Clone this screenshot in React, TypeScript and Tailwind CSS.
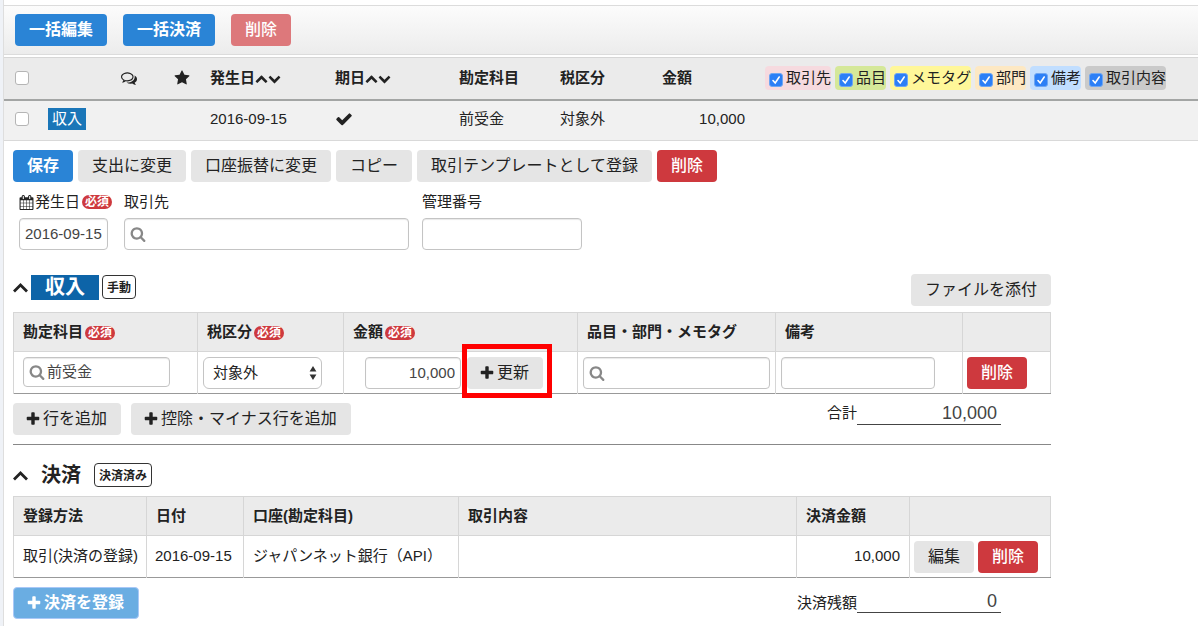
import type { ReactNode } from "react"
import clsx from "clsx"

const icons = {
  comments:
    "M704 384q-153 0-286 52t-211.5 141-78.5 191q0 82 53 158t149 132l97 56-35 84q34-20 62-39l44-31 53 10q78 14 153 14 153 0 286-52t211.5-141 78.5-191-78.5-191-211.5-141-286-52zm0-128q191 0 353.5 68.5t256.5 186.5 94 257-94 257-256.5 186.5-353.5 68.5q-86 0-176-16-124 88-278 128-36 9-86 16h-3q-11 0-20.5-8t-11.5-21q-1-3-1-6.5t.5-6.5 2-6l2.5-5 3.5-5.5 4-5 4.5-5 4-4.5q5-6 23-25t26-29.5 22.5-29 25-38.5 20.5-44q-124-72-195-177t-71-224q0-139 94-257t256.5-186.5 353.5-68.5zm822 1169q10 24 20.5 44t25 38.5 22.5 29 26 29.5 23 25q1 1 4 4.5t4.5 5 4 5 3.5 5.5l2.5 5 2 6 .5 6.5-1 6.5q-3 14-13 22t-22 7q-50-7-86-16-154-40-278-128-90 16-176 16-271 0-472-132 58 4 88 4 161 0 309-45t264-129q125-92 192-212t67-254q0-77-23-152 129 71 204 178t75 230q0 120-71 224.5t-195 176.5z",
  star: "M1728 647q0 22-26 48l-363 354 86 500q1 7 1 20 0 21-10.5 35.5t-30.5 14.5q-19 0-40-12l-449-236-449 236q-22 12-40 12-21 0-31.5-14.5t-10.5-35.5q0-6 2-20l86-500-364-354q-25-27-25-48 0-37 56-46l502-73 225-455q19-41 49-41t49 41l225 455 502 73q56 9 56 46z",
  check:
    "M1671 566q0 40-28 68l-724 724-136 136q-28 28-68 28t-68-28l-136-136-362-362q-28-28-28-68t28-68l136-136q28-28 68-28t68 28l294 295 656-657q28-28 68-28t68 28l136 136q28 28 28 68z",
  up: "M1683 1331l-166 165q-19 19-45 19t-45-19l-531-531-531 531q-19 19-45 19t-45-19l-166-165q-19-19-19-45.5t19-45.5l742-741q19-19 45-19t45 19l742 741q19 19 19 45.5t-19 45.5z",
  down: "M1683 808l-742 741q-19 19-45 19t-45-19l-742-741q-19-19-19-45.5t19-45.5l166-165q19-19 45-19t45 19l531 531 531-531q19-19 45-19t45 19l166 165q19 19 19 45.5t-19 45.5z",
  plus: "M1600 736v192q0 40-28 68t-68 28h-416v416q0 40-28 68t-68 28h-192q-40 0-68-28t-28-68v-416h-416q-40 0-68-28t-28-68v-192q0-40 28-68t68-28h416v-416q0-40 28-68t68-28h192q40 0 68 28t28 68v416h416q40 0 68 28t28 68z",
  search:
    "M1216 832q0-185-131.5-316.5t-316.5-131.5-316.5 131.5-131.5 316.5 131.5 316.5 316.5 131.5 316.5-131.5 131.5-316.5zm512 832q0 52-38 90t-90 38q-54 0-90-38l-343-342q-179 124-399 124-143 0-273.5-55.5t-225-150-150-225-55.5-273.5 55.5-273.5 150-225 225-150 273.5-55.5 273.5 55.5 225 150 150 225 55.5 273.5q0 220-124 399l343 343q37 37 37 90z",
  calendar:
    "M192 1664h288v-288h-288v288zm352 0h320v-288h-320v288zm-352-352h288v-320h-288v320zm352 0h320v-320h-320v320zm-352-384h288v-288h-288v288zm736 736h320v-288h-320v288zm-384-736h320v-288h-320v288zm768 736h288v-288h-288v288zm-384-352h320v-320h-320v320zm-352-864v-288q0-13-9.5-22.5t-22.5-9.5h-64q-13 0-22.5 9.5t-9.5 22.5v288q0 13 9.5 22.5t22.5 9.5h64q13 0 22.5-9.5t9.5-22.5zm736 864h288v-320h-288v320zm-384-384h320v-288h-320v288zm384 0h288v-288h-288v288zm32-480v-288q0-13-9.5-22.5t-22.5-9.5h-64q-13 0-22.5 9.5t-9.5 22.5v288q0 13 9.5 22.5t22.5 9.5h64q13 0 22.5-9.5t9.5-22.5zm384-64v1280q0 52-38 90t-90 38h-1408q-52 0-90-38t-38-90v-1280q0-52 38-90t90-38h128v-96q0-66 47-113t113-47h64q66 0 113 47t47 113v96h384v-96q0-66 47-113t113-47h64q66 0 113 47t47 113v96h128q52 0 90 38t38 90z",
}

function Icon({ name, className = "size-4" }: { name: keyof typeof icons; className?: string }) {
  return (
    <svg viewBox="0 0 1792 1792" fill="currentColor" aria-hidden="true" className={clsx("shrink-0", className)}>
      <path d={icons[name]} />
    </svg>
  )
}

const buttonColors = {
  gray: "bg-[#e5e5e5] text-[#222]",
  blue: "bg-[#2a84d6] font-bold text-white",
  lightBlue: "border border-[#a9c8f7] bg-[#6aade2] font-bold text-white",
  red: "bg-[#ce393e] font-medium text-white",
  fadedRed: "bg-[#dd787b] font-medium text-white",
}

function Button({
  color = "gray",
  icon,
  children,
}: {
  color?: keyof typeof buttonColors
  icon?: keyof typeof icons
  children: ReactNode
}) {
  return (
    <button
      type="button"
      className={clsx(
        "inline-flex h-8 shrink-0 items-center rounded text-base leading-6 whitespace-nowrap",
        icon ? "gap-0.5 pr-3.5 pl-3" : "px-3.5",
        buttonColors[color]
      )}
    >
      {icon && <Icon name={icon} />}
      {children}
    </button>
  )
}

function Required() {
  return (
    <span className="ml-0.5 inline-block rounded-full bg-[#ce393e] px-[3px] text-xs leading-[14px] font-bold text-white">
      必須
    </span>
  )
}

function Check({ label }: { label: string }) {
  return (
    <input
      type="checkbox"
      aria-label={label}
      className="block size-[14px] appearance-none rounded-[3px] border border-[#b5b5b5] bg-white"
    />
  )
}

function TextField({
  id,
  value,
  search,
  align,
  className,
}: {
  id: string
  value?: string
  search?: boolean
  align?: "right"
  className?: string
}) {
  return (
    <div
      className={clsx(
        "flex items-center gap-0.5 rounded border border-[#c4c4c4] bg-white px-[5px] shadow-[inset_0_1px_1px_#e8e8e8]",
        className
      )}
    >
      {search && <Icon name="search" className="size-4 text-[#888]" />}
      <input
        id={id}
        type="text"
        defaultValue={value}
        className={clsx("w-full min-w-0 bg-transparent text-[#444] outline-none", align === "right" && "text-right")}
      />
    </div>
  )
}

const tags = [
  { name: "取引先", color: "bg-[#f6dadf]" },
  { name: "品目", color: "bg-[#d5e899]" },
  { name: "メモタグ", color: "bg-[#fff799]" },
  { name: "部門", color: "bg-[#fde8c3]" },
  { name: "備考", color: "bg-[#c1deff]" },
  { name: "取引内容", color: "bg-[#cacaca]" },
]

function Tag({ name, color }: { name: string; color: string }) {
  return (
    <label className={clsx("flex h-6 items-center gap-[3px] rounded pl-1 font-normal whitespace-nowrap", color)}>
      <span className="relative mt-1 block size-[14px]">
        <input
          type="checkbox"
          defaultChecked
          className="block size-[14px] appearance-none rounded-[3px] border border-[#6ea6f2] bg-white checked:bg-[#2c7ff6]"
        />
        <svg viewBox="0 0 14 14" className="pointer-events-none absolute inset-0 text-white" aria-hidden="true">
          <path d="M4 7.5 6.2 10 10.2 4" fill="none" stroke="currentColor" strokeWidth="1.6" strokeLinecap="round" />
        </svg>
      </span>
      {name}
    </label>
  )
}

function SortHeader({ children }: { children: ReactNode }) {
  return (
    <span className="flex items-center">
      {children}
      <button type="button" aria-label="昇順">
        <Icon name="up" className="size-[13px]" />
      </button>
      <button type="button" aria-label="降順">
        <Icon name="down" className="size-[13px]" />
      </button>
    </span>
  )
}

function DealList() {
  return (
    <table className="w-full table-fixed border-t border-[#d6d6d6] text-left">
      <colgroup>
        <col className="w-[44px]" />
        <col className="w-[73px]" />
        <col className="w-[53px]" />
        <col className="w-[36px]" />
        <col className="w-[125px]" />
        <col className="w-[124px]" />
        <col className="w-[101px]" />
        <col className="w-[102px]" />
        <col className="w-[103px]" />
        <col />
      </colgroup>
      <thead>
        <tr className="h-[42px] border-b-2 border-[#a3a5a4] bg-[#ebebeb]">
          <th className="pl-[11px]">
            <Check label="すべて選択" />
          </th>
          <th></th>
          <th>
            <Icon name="comments" />
          </th>
          <th>
            <Icon name="star" />
          </th>
          <th>
            <SortHeader>発生日</SortHeader>
          </th>
          <th>
            <SortHeader>期日</SortHeader>
          </th>
          <th>勘定科目</th>
          <th>税区分</th>
          <th>金額</th>
          <th>
            <div className="flex gap-1">
              {tags.map((tag) => (
                <Tag key={tag.name} {...tag} />
              ))}
            </div>
          </th>
        </tr>
      </thead>
      <tbody>
        <tr className="h-[41px] border-b border-[#d9d9d9] bg-[#f1f1f1] [&>td]:pb-0.5">
          <td className="pl-[11px]">
            <Check label="選択" />
          </td>
          <td>
            <span className="inline-block bg-[#1a76b8] px-1 leading-[22px] text-white">収入</span>
          </td>
          <td></td>
          <td></td>
          <td>2016-09-15</td>
          <td>
            <Icon name="check" className="size-[18px]" />
          </td>
          <td>前受金</td>
          <td>対象外</td>
          <td className="pr-5 text-right">10,000</td>
          <td></td>
        </tr>
      </tbody>
    </table>
  )
}

function Collapse({ label }: { label: string }) {
  return (
    <button type="button" aria-label={label}>
      <svg viewBox="0 0 15 11" className="h-[11px] w-[15px]" fill="none" stroke="#222" strokeWidth="2.8">
        <path d="M1 9.5 7.5 3 14 9.5" />
      </svg>
    </button>
  )
}

function Status({ children }: { children: ReactNode }) {
  return (
    <span className="rounded border border-[#333] px-1 pt-0.5 text-xs leading-5 font-bold">{children}</span>
  )
}

function Total({ id, label, value, className }: { id: string; label: string; value: string; className?: string }) {
  return (
    <div className={clsx("flex", className)}>
      <label htmlFor={id}>{label}</label>
      <input
        id={id}
        readOnly
        value={value}
        className="h-[22px] w-36 border-b border-[#444] bg-transparent pr-1 text-right text-lg leading-5 text-[#444]"
      />
    </div>
  )
}

const tableClass =
  "w-full table-fixed border border-[#d6d6d6] border-b-[#999] text-left [&_td]:border-l [&_td]:border-[#d6d6d6] [&_th]:border-l [&_th]:border-[#d6d6d6]"

function IncomeTable() {
  return (
    <table className={tableClass}>
      <colgroup>
        <col className="w-[184px]" />
        <col className="w-[146px]" />
        <col className="w-[234px]" />
        <col className="w-[198px]" />
        <col />
        <col className="w-[88px]" />
      </colgroup>
      <thead>
        <tr className="h-[39px] bg-[#ebebeb]">
          <th className="pl-[9px]">
            <label htmlFor="account">勘定科目</label>
            <Required />
          </th>
          <th className="pl-[9px]">
            <label htmlFor="tax">税区分</label>
            <Required />
          </th>
          <th className="pl-[9px]">
            <label htmlFor="amount">金額</label>
            <Required />
          </th>
          <th className="pl-[9px]">
            <label htmlFor="items">品目・部門・メモタグ</label>
          </th>
          <th className="pl-[9px]">
            <label htmlFor="note">備考</label>
          </th>
          <th></th>
        </tr>
      </thead>
      <tbody>
        <tr className="h-[42px] border-t border-[#d6d6d6]">
          <td className="pb-0.5 pl-[9px]">
            <TextField id="account" value="前受金" search className="h-[30px] w-[147px]" />
          </td>
          <td className="pl-[5px]">
            <div className="relative w-[119px]">
              <select
                id="tax"
                className="block h-8 w-full appearance-none rounded-md border border-[#c4c4c4] bg-white pl-[9px]"
              >
                <option>対象外</option>
              </select>
              <svg
                viewBox="0 0 8 14"
                className="pointer-events-none absolute top-[9px] right-[5px] h-[14px] w-2"
                aria-hidden="true"
              >
                <path d="M4 0 7.4 5.6H.6zM4 14 .6 8.4h6.8z" fill="#333" />
              </svg>
            </div>
          </td>
          <td className="pl-[21px]">
            <div className="flex gap-[6px]">
              <TextField id="amount" value="10,000" align="right" className="h-8 w-24" />
              <div className="relative">
                <Button icon="plus">更新</Button>
                <span className="pointer-events-none absolute -top-[13px] -right-[9px] -bottom-[9px] -left-[5px] border-[5px] border-[#f00]" />
              </div>
            </div>
          </td>
          <td className="px-[5px]">
            <TextField id="items" search className="h-8 w-full" />
          </td>
          <td className="pl-[5px]">
            <TextField id="note" className="h-8 w-[154px]" />
          </td>
          <td className="pl-1">
            <Button color="red">削除</Button>
          </td>
        </tr>
      </tbody>
    </table>
  )
}

function SettlementTable() {
  return (
    <table className={tableClass}>
      <colgroup>
        <col className="w-[133px]" />
        <col className="w-[97px]" />
        <col className="w-[215px]" />
        <col />
        <col className="w-[113px]" />
        <col className="w-[141px]" />
      </colgroup>
      <thead>
        <tr className="h-[39px] bg-[#ebebeb]">
          <th className="pl-[9px]">登録方法</th>
          <th className="pl-[9px]">日付</th>
          <th className="pl-[9px]">口座(勘定科目)</th>
          <th className="pl-[9px]">取引内容</th>
          <th className="pl-[9px]">決済金額</th>
          <th></th>
        </tr>
      </thead>
      <tbody>
        <tr className="h-[42px] border-t border-[#d6d6d6]">
          <td className="pb-0.5 pl-[9px] whitespace-nowrap">取引(決済の登録)</td>
          <td className="pb-0.5 pl-2">2016-09-15</td>
          <td className="pb-0.5 pl-[9px]">ジャパンネット銀行（API）</td>
          <td></td>
          <td className="pr-[9px] pb-0.5 text-right">10,000</td>
          <td className="pl-1">
            <div className="flex gap-1">
              <Button>編集</Button>
              <Button color="red">削除</Button>
            </div>
          </td>
        </tr>
      </tbody>
    </table>
  )
}

export default function App() {
  return (
    <div className="min-h-screen bg-[#eff2f7] pl-[3px] font-['Liberation_Sans','Noto_Sans_CJK_JP',sans-serif] text-[15px] leading-5 text-[#222]">
      <main className="min-h-screen border-l border-[#dedede] bg-white pt-[5px]">
        <div className="mb-0.5 flex gap-4 border-y border-[#dcdcdc] bg-linear-to-b from-[#fcfcfc] to-[#ececec] px-[11px] py-2">
          <Button color="blue">一括編集</Button>
          <Button color="blue">一括決済</Button>
          <Button color="fadedRed">削除</Button>
        </div>
        <DealList />

        <form className="w-full max-w-[1047px] pt-[9px] pl-[9px]">
          <div className="flex gap-[5px]">
            <Button color="blue">保存</Button>
            <Button>支出に変更</Button>
            <Button>口座振替に変更</Button>
            <Button>コピー</Button>
            <Button>取引テンプレートとして登録</Button>
            <Button color="red">削除</Button>
          </div>

          <div className="mt-[10px] flex gap-[13px] pl-[6px]">
            <div className="w-[92px]">
              <div className="mb-[6px] flex items-center whitespace-nowrap">
                <Icon name="calendar" className="mr-px size-[15px]" />
                <label htmlFor="date">発生日</label>
                <Required />
              </div>
              <TextField id="date" value="2016-09-15" className="h-8 w-[89px]" />
            </div>
            <div className="w-[285px]">
              <label htmlFor="partner" className="mb-[6px] block">
                取引先
              </label>
              <TextField id="partner" search className="h-8" />
            </div>
            <div className="w-40">
              <label htmlFor="number" className="mb-[6px] block">
                管理番号
              </label>
              <TextField id="number" className="h-8" />
            </div>
          </div>

          <section className="mt-6 border-b border-[#888] pb-[9px]">
            <div className="mb-[6px] flex items-start justify-between">
              <div className="flex h-[26px] items-center gap-[3px]">
                <Collapse label="収入を閉じる" />
                <h2 className="bg-[#0d64a8] px-[14px] text-xl leading-[25px] font-bold text-white">収入</h2>
                <Status>手動</Status>
              </div>
              <Button>ファイルを添付</Button>
            </div>
            <IncomeTable />
            <div className="mt-[9px] flex items-start justify-between pr-[50px]">
              <div className="flex gap-[10px]">
                <Button icon="plus">行を追加</Button>
                <Button icon="plus">控除・マイナス行を追加</Button>
              </div>
              <Total id="total" label="合計" value="10,000" className="items-start" />
            </div>
          </section>

          <section className="mt-[17px]">
            <div className="mb-2 flex h-[26px] items-center gap-[13px]">
              <Collapse label="決済を閉じる" />
              <h2 className="text-xl leading-[25px] font-bold">決済</h2>
              <Status>決済済み</Status>
            </div>
            <SettlementTable />
            <div className="mt-[9px] flex items-start justify-between pr-[50px]">
              <Button color="lightBlue" icon="plus">
                決済を登録
              </Button>
              <Total id="balance" label="決済残額" value="0" className="mt-1 items-end" />
            </div>
          </section>
        </form>
      </main>
    </div>
  )
}
